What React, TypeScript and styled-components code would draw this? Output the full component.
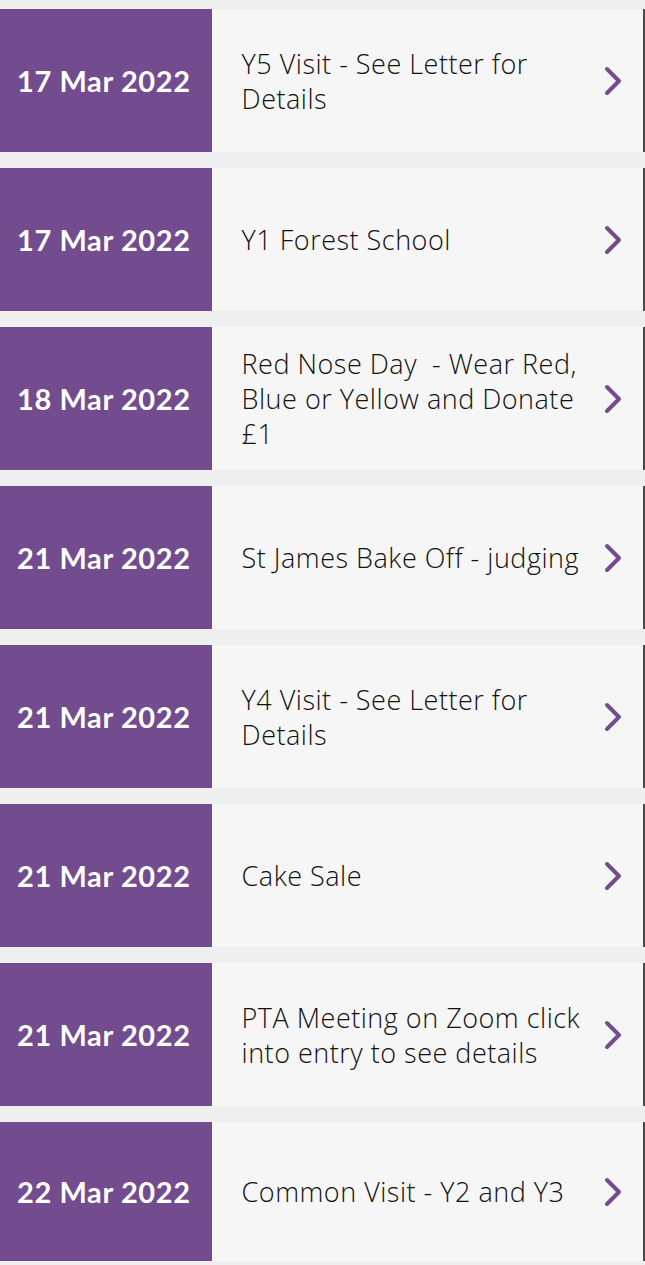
import React from 'react';
import styled, {createGlobalStyle} from "styled-components";

type EventType = {
    date: string
    title: string
}

const events: EventType[] = [
    {date: "17 Mar 2022", title: "Y5 Visit - See Letter for Details"},
    {date: "17 Mar 2022", title: "Y1 Forest School"},
    {date: "18 Mar 2022", title: "Red Nose Day  - Wear Red, Blue or Yellow and Donate £1"},
    {date: "21 Mar 2022", title: "St James Bake Off - judging"},
    {date: "21 Mar 2022", title: "Y4 Visit - See Letter for Details"},
    {date: "21 Mar 2022", title: "Cake Sale"},
    {date: "21 Mar 2022", title: "PTA Meeting on Zoom click into entry to see details"},
    {date: "22 Mar 2022", title: "Common Visit - Y2 and Y3"},
];

const Chevron = () => (
    <ChevronIcon viewBox="0 0 20 32" width="20" height="32">
        <path d="M4 4 L16 16 L4 28" fill="none" stroke="#724c8f" strokeWidth="4"
              strokeLinecap="round" strokeLinejoin="round"/>
    </ChevronIcon>
);

const EventCard = (props: EventType) => {
    return (
        <Card>
            <DateBlock>{props.date}</DateBlock>
            <Title>{props.title.replace(/  /g, "\u00a0 ")}</Title>
            <Chevron/>
        </Card>
    );
};

export default function App() {
    return (
        <>
            <GlobalStyle/>
            <List>
                {events.map((e, i) => <EventCard key={i} date={e.date} title={e.title}/>)}
            </List>
        </>
    );
}

const GlobalStyle = createGlobalStyle`
    html, body {
        margin: 0;
        padding: 0;
        background: #efefef;
    }
    body {
        font-family: Lato, "Open Sans", sans-serif;
    }
`

const List = styled.div`
    display: flex;
    flex-direction: column;
    gap: 16px;
    padding-top: 9px;
    height: 1265px;
    overflow: hidden;
    box-sizing: border-box;
`

const Card = styled.div`
    display: flex;
    align-items: stretch;
    flex-shrink: 0;
    height: 143px;
    background: #f6f6f6;
    border-right: 2px solid #4a4a4a;

    &:last-child {
        height: 139px;
    }
`

const DateBlock = styled.div`
    display: flex;
    align-items: center;
    padding: 0 21px 0 17px;
    background: #724c8f;
    color: #fff;
    font-family: Lato, sans-serif;
    font-weight: 700;
    font-size: 29px;
    letter-spacing: 0.6px;
    white-space: nowrap;
`

const Title = styled.div`
    flex: 1;
    display: flex;
    align-items: center;
    padding-left: 30px;
    font-family: "Open Sans", sans-serif;
    font-weight: 300;
    font-size: 27px;
    letter-spacing: 0.5px;
    line-height: 35px;
    color: #111;
`

const ChevronIcon = styled.svg`
    align-self: center;
    flex-shrink: 0;
    margin: 0 20px 0 2px;
`
